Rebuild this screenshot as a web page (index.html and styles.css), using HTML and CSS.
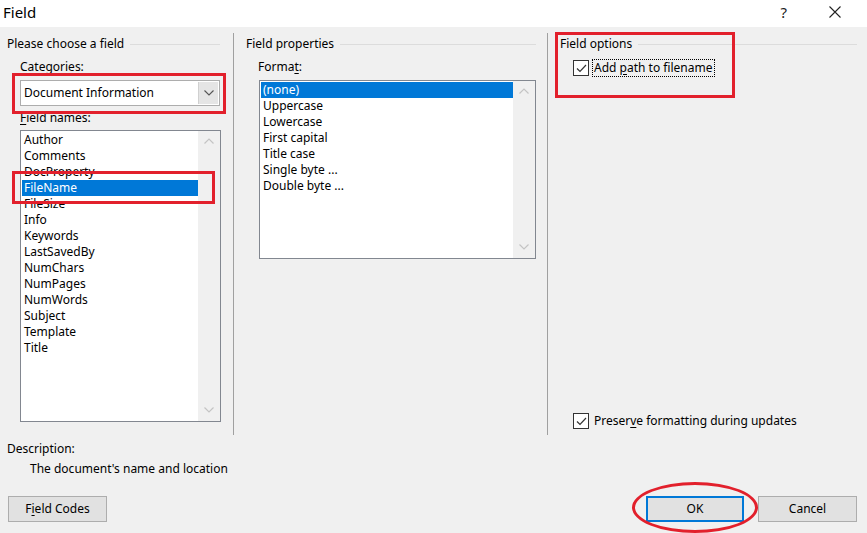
FILE: index.html
```html
<!DOCTYPE html>
<html>
<head>
<meta charset="utf-8">
<title>Field</title>
<link rel="stylesheet" href="styles.css">
</head>
<body>
<div class="dialog">
  <div class="titlebar">
    <span class="title">Field</span>
    <div class="tb-actions">
      <span class="help">?</span>
      <svg class="close" width="12" height="12" viewBox="0 0 12 12"><path d="M0.5 0.5 L11.5 11.5 M11.5 0.5 L0.5 11.5" stroke="#222" stroke-width="1.1" fill="none"/></svg>
    </div>
  </div>

  <div class="main">
    <section class="col col-choose">
      <div class="group-head"><span>Please choose a field</span><i class="rule"></i></div>
      <div class="inner">
        <div class="lbl">Categories:</div>
        <div class="combo">
          <span class="combo-text">Document Information</span>
          <span class="combo-btn"><svg width="10" height="6" viewBox="0 0 10 6"><path d="M0.5 0.5 L5 5 L9.5 0.5" stroke="#555" stroke-width="1.1" fill="none"/></svg></span>
        </div>
        <div class="lbl lbl-names"><u>F</u>ield names:</div>
        <div class="listbox list-names">
          <ul class="items">
            <li>Author</li>
            <li>Comments</li>
            <li>DocProperty</li>
            <li class="sel">FileName</li>
            <li>FileSize</li>
            <li>Info</li>
            <li>Keywords</li>
            <li>LastSavedBy</li>
            <li>NumChars</li>
            <li>NumPages</li>
            <li>NumWords</li>
            <li>Subject</li>
            <li>Template</li>
            <li>Title</li>
          </ul>
          <div class="scroll">
            <svg width="10" height="6" viewBox="0 0 10 6"><path d="M0.5 5.5 L5 1 L9.5 5.5" stroke="#c4c4c4" stroke-width="1.2" fill="none"/></svg>
            <svg width="10" height="6" viewBox="0 0 10 6"><path d="M0.5 0.5 L5 5 L9.5 0.5" stroke="#c4c4c4" stroke-width="1.2" fill="none"/></svg>
          </div>
        </div>
      </div>
    </section>

    <div class="vsep"></div>

    <section class="col col-props">
      <div class="group-head"><span>Field properties</span><i class="rule"></i></div>
      <div class="inner">
        <div class="lbl">Forma<u>t</u>:</div>
        <div class="listbox list-format">
          <ul class="items">
            <li class="sel">(none)</li>
            <li>Uppercase</li>
            <li>Lowercase</li>
            <li>First capital</li>
            <li>Title case</li>
            <li>Single byte ...</li>
            <li>Double byte ...</li>
          </ul>
          <div class="scroll">
            <svg width="10" height="6" viewBox="0 0 10 6"><path d="M0.5 5.5 L5 1 L9.5 5.5" stroke="#c4c4c4" stroke-width="1.2" fill="none"/></svg>
            <svg width="10" height="6" viewBox="0 0 10 6"><path d="M0.5 0.5 L5 5 L9.5 0.5" stroke="#c4c4c4" stroke-width="1.2" fill="none"/></svg>
          </div>
        </div>
      </div>
    </section>

    <div class="vsep"></div>

    <section class="col col-options">
      <div class="group-head"><span>Field options</span><i class="rule"></i></div>
      <div class="inner options-inner">
        <div class="check-row">
          <span class="checkbox"><svg width="11" height="9" viewBox="0 0 11 9"><path d="M1 4.5 L4 7.5 L10 1" stroke="#333" stroke-width="1.2" fill="none"/></svg></span>
          <span class="check-label focus">Add <u>p</u>ath to filename</span>
        </div>
        <div class="check-row">
          <span class="checkbox"><svg width="11" height="9" viewBox="0 0 11 9"><path d="M1 4.5 L4 7.5 L10 1" stroke="#333" stroke-width="1.2" fill="none"/></svg></span>
          <span class="check-label">Preser<u>v</u>e formatting during updates</span>
        </div>
      </div>
    </section>
  </div>

  <div class="desc">
    <div class="desc-label">Description:</div>
    <div class="desc-text">The document's name and location</div>
  </div>

  <div class="footer">
    <button class="btn">F<u>i</u>eld Codes</button>
    <div class="footer-right">
      <button class="btn btn-default">OK</button>
      <button class="btn">Cancel</button>
    </div>
  </div>

  <div class="mark mark-cat"></div>
  <div class="mark mark-file"></div>
  <div class="mark mark-opt"></div>
  <div class="mark mark-ok"></div>
</div>
</body>
</html>
```

FILE: styles.css
```css
* { box-sizing: border-box; }

html, body {
  margin: 0;
  padding: 0;
  background: #f0f0f0;
}

body {
  font-family: "Noto Sans", "Open Sans", sans-serif;
  font-size: 12px;
  line-height: 16px;
  color: #000;
}

u { text-decoration: underline; text-underline-offset: 2px; }

.dialog {
  position: relative;
  width: 867px;
  height: 533px;
  overflow: hidden;
}

.titlebar {
  height: 27px;
  background: #fff;
  display: flex;
  align-items: center;
  justify-content: space-between;
  padding: 0 26px 0 3px;
}

.title {
  font-size: 15px;
  line-height: 20px;
  margin-top: -3px;
}

.tb-actions {
  display: flex;
  align-items: center;
  gap: 42px;
  margin-top: -3px;
}

.help {
  font-size: 15px;
  color: #222;
}

.main {
  display: grid;
  grid-template-columns: 233px 1px 313px 1px 1fr;
  height: 410px;
}

.vsep {
  background: #a0a0a0;
  margin: 6px 0 2px;
}

.col {
  padding-top: 9px;
  display: flex;
  flex-direction: column;
}

.col-choose { padding-left: 7px; padding-right: 13px; }
.col-props { padding-left: 12px; padding-right: 11px; }
.col-options { padding-left: 12px; padding-right: 10px; }

.group-head {
  display: flex;
  align-items: center;
  gap: 6px;
  height: 16px;
}

.group-head span { white-space: nowrap; }

.rule {
  flex: 1;
  height: 1px;
  background: #dcdcdc;
}

.inner {
  margin-left: 13px;
  padding-top: 7px;
}

.col-props .inner { margin-left: 12px; }

.lbl { height: 16px; }

.lbl-names { margin-top: 4px; }

.combo {
  margin-top: 5px;
  height: 26px;
  background: #fff;
  border: 1px solid #adadad;
  display: flex;
  align-items: stretch;
  padding: 1px;
}

.combo-text {
  flex: 1;
  display: flex;
  align-items: center;
  padding-left: 2px;
}

.combo-btn {
  width: 20px;
  background: #e5e5e5;
  border-left: 1px solid #d0d0d0;
  display: flex;
  align-items: center;
  justify-content: center;
}

.listbox {
  margin-top: 4px;
  background: #fff;
  border: 1px solid #828790;
  display: flex;
}

.list-names { height: 292px; margin-right: -1px; }
.list-format { margin-top: 5px; height: 179px; margin-left: 1px; }

.items {
  list-style: none;
  margin: 0;
  padding: 1px 0 0 1px;
  flex: 1;
}

.items li {
  height: 16px;
  padding-left: 2px;
  white-space: nowrap;
}

.items li.sel {
  background: #0078d7;
  color: #fff;
}

.scroll {
  width: 22px;
  background: #f0f0f0;
  display: flex;
  flex-direction: column;
  justify-content: space-between;
  align-items: center;
  padding: 7px 0 8px;
}

.options-inner {
  flex: 1;
  display: flex;
  flex-direction: column;
  justify-content: space-between;
  padding-top: 8px;
  padding-bottom: 8px;
}

.check-row {
  display: flex;
  align-items: center;
  gap: 4px;
  height: 16px;
}

.checkbox {
  width: 16px;
  height: 16px;
  border: 1px solid #333;
  background: #fff;
  display: flex;
  align-items: center;
  justify-content: center;
}

.check-label { padding: 0 1px; }

.check-label.focus {
  outline: 1px dotted #000;
  outline-offset: 0;
}

.desc {
  padding: 4px 0 0 7px;
}

.desc-label { height: 16px; }

.desc-text {
  margin-top: 4px;
  padding-left: 23px;
  height: 16px;
}

.footer {
  margin-top: 19px;
  display: flex;
  justify-content: space-between;
  padding: 0 10px 0 8px;
}

.footer-right {
  display: flex;
  gap: 14px;
}

.btn {
  font: inherit;
  color: #000;
  height: 26px;
  width: 99px;
  background: #e1e1e1;
  border: 1px solid #adadad;
  padding: 0;
}

.btn-default {
  border: 2px solid #0078d7;
  width: 98px;
}

.mark {
  position: absolute;
  border: 3px solid #e2202c;
  pointer-events: none;
}

.mark-cat { left: 12px; top: 73px; width: 214px; height: 41px; }
.mark-file { left: 12px; top: 171px; width: 203px; height: 33px; }
.mark-opt { left: 555px; top: 32px; width: 180px; height: 66px; }
.mark-ok { left: 632px; top: 482px; width: 126px; height: 51px; border-radius: 50%; }
```
